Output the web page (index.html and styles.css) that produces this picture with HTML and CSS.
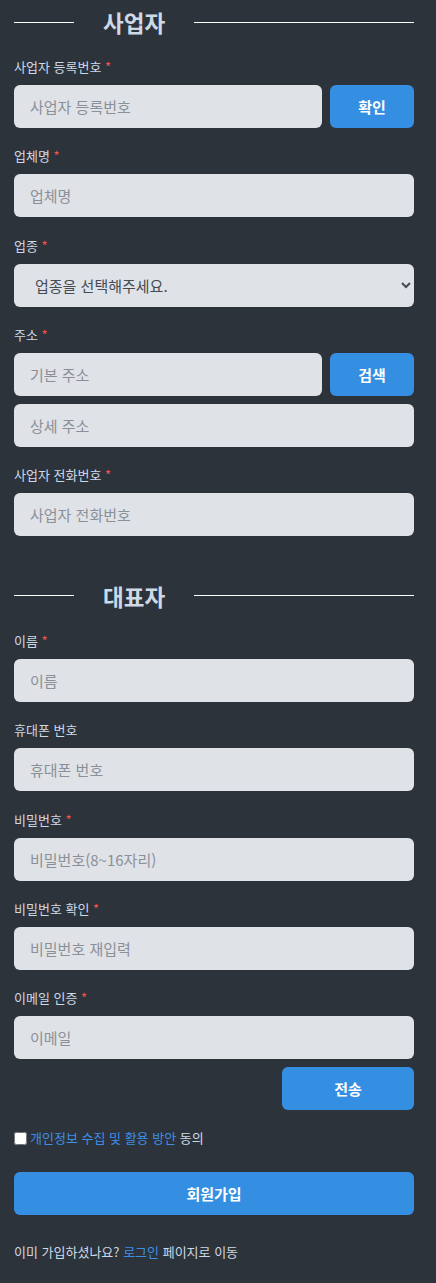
FILE: index.html
```html
<!DOCTYPE html>
<html lang="ko">
<head>
<meta charset="utf-8">
<title>회원가입</title>
<link rel="stylesheet" href="styles.css">
</head>
<body>
<form class="form">
  <div class="section-title"><span class="line short"></span><h2>사업자</h2><span class="line long"></span></div>

  <div class="field">
    <label class="label">사업자 등록번호 <span class="req">*</span></label>
    <div class="row">
      <input class="input" type="text" placeholder="사업자 등록번호">
      <button type="button" class="btn btn-side">확인</button>
    </div>
  </div>

  <div class="field">
    <label class="label">업체명 <span class="req">*</span></label>
    <input class="input" type="text" placeholder="업체명">
  </div>

  <div class="field">
    <label class="label">업종 <span class="req">*</span></label>
    <select class="input select">
      <option>업종을 선택해주세요.</option>
    </select>
  </div>

  <div class="field">
    <label class="label">주소 <span class="req">*</span></label>
    <div class="row">
      <input class="input" type="text" placeholder="기본 주소">
      <button type="button" class="btn btn-side">검색</button>
    </div>
    <input class="input gap-top" type="text" placeholder="상세 주소">
  </div>

  <div class="field">
    <label class="label">사업자 전화번호 <span class="req">*</span></label>
    <input class="input" type="text" placeholder="사업자 전화번호">
  </div>

  <div class="section-title second"><span class="line short"></span><h2>대표자</h2><span class="line long"></span></div>

  <div class="field">
    <label class="label">이름 <span class="req">*</span></label>
    <input class="input" type="text" placeholder="이름">
  </div>

  <div class="field">
    <label class="label">휴대폰 번호</label>
    <input class="input" type="text" placeholder="휴대폰 번호">
  </div>

  <div class="field">
    <label class="label">비밀번호 <span class="req">*</span></label>
    <input class="input" type="password" placeholder="비밀번호(8~16자리)">
  </div>

  <div class="field">
    <label class="label">비밀번호 확인 <span class="req">*</span></label>
    <input class="input" type="password" placeholder="비밀번호 재입력">
  </div>

  <div class="field last">
    <label class="label">이메일 인증 <span class="req">*</span></label>
    <input class="input" type="text" placeholder="이메일">
    <div class="send-row"><button type="button" class="btn btn-send">전송</button></div>
  </div>

  <div class="agree">
    <input type="checkbox" class="check"><a class="link" href="#">개인정보 수집 및 활용 방안</a>&nbsp;동의
  </div>

  <button type="button" class="btn btn-submit">회원가입</button>

  <p class="footer">이미 가입하셨나요? <a class="link" href="#">로그인</a> 페이지로 이동</p>
</form>
</body>
</html>
```
FILE: styles.css
```css
* { box-sizing: border-box; }
html, body { margin: 0; padding: 0; }
body {
  background: #2d333b;
  color: #cdd9e5;
  font-family: "Noto Sans CJK KR", "Noto Sans", sans-serif;
  width: 436px;
  min-height: 1283px;
}
.form {
  width: 400px;
  margin-left: 14px;
  padding-bottom: 20px;
}
.section-title {
  display: flex;
  align-items: center;
  height: 44px;
  margin-bottom: 14px;
}
.section-title.second { margin-top: 37.8px; }
.section-title h2 {
  margin: 0 29px;
  font-size: 22.5px;
  font-weight: 700;
  color: #cdd9e5;
  line-height: 44px;
}
.line { height: 1px; background: #ffffff; display: block; }
.line.short { width: 60px; }
.line.long { flex: 1; }

.field { margin-bottom: 19.3px; }
.field.last { margin-bottom: 0; }
.label {
  display: block;
  font-size: 13px;
  line-height: 18px;
  height: 18px;
  margin-bottom: 9px;
  color: #cdd9e5;
}
.req { color: #f85149; }
.row { display: flex; gap: 8px; }
.input {
  display: block;
  width: 100%;
  height: 43px;
  border: none;
  outline: none;
  border-radius: 6px;
  background: #dfe2e7;
  padding: 0 16px;
  font-family: "Noto Sans CJK KR", "Noto Sans", sans-serif;
  font-size: 15px;
  color: #444c56;
}
.row .input { flex: 1; width: auto; min-width: 0; }
.input::placeholder { color: #8b9098; }
.select { padding: 0 8px 0 17px; color: #454b53; }
.gap-top { margin-top: 8px; }

.btn {
  border: none;
  border-radius: 6px;
  background: #348fe2;
  color: #ffffff;
  font-family: "Noto Sans CJK KR", "Noto Sans", sans-serif;
  font-size: 15px;
  font-weight: 700;
  height: 43px;
  cursor: pointer;
}
.btn-side { width: 84px; flex: none; }
.send-row { display: flex; justify-content: flex-end; margin-top: 8px; }
.btn-send { width: 132px; }

.agree {
  display: flex;
  align-items: center;
  font-size: 13px;
  line-height: 18px;
  margin-top: 19px;
  color: #cdd9e5;
}
.check { margin: 0 3px 0 0; width: 13px; height: 13px; }
.link { color: #3d8fe6; text-decoration: none; }

.btn-submit { display: block; width: 100%; margin-top: 25px; }
.footer {
  margin: 28px 0 0;
  font-size: 13px;
  line-height: 18px;
  color: #cdd9e5;
}
```
